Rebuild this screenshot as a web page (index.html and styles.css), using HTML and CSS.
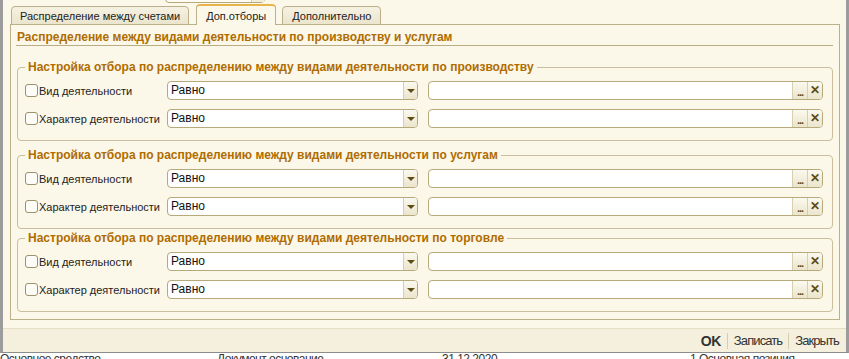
FILE: index.html
```html
<!DOCTYPE html>
<html lang="ru">
<head>
  <meta charset="UTF-8" />
  <title>Доп.отборы</title>
  <link rel="stylesheet" href="styles.css">
</head>
<body>

  <div class="window">
    <!-- cut-off field above the tabs -->
    <div class="stub"><span class="stub-box"><span class="stub-btn"></span></span></div>

    <!-- Tabs -->
    <div class="tabs">
      <div class="tab">Распределение между счетами</div>
      <div class="tab active">Доп.отборы</div>
      <div class="tab">Дополнительно</div>
    </div>

    <div class="panel">
      <div class="panel-title">Распределение между видами деятельности по производству и услугам</div>

      <fieldset class="group">
        <legend>Настройка отбора по распределению между видами деятельности по производству</legend>
        <div class="row">
          <label class="check"><span class="box"></span>Вид деятельности</label>
          <div class="select"><span class="value">Равно</span><span class="drop"></span></div>
          <div class="field"><span class="value"></span><span class="btn dots">...</span><span class="btn clear">✕</span></div>
        </div>
        <div class="row">
          <label class="check"><span class="box"></span>Характер деятельности</label>
          <div class="select"><span class="value">Равно</span><span class="drop"></span></div>
          <div class="field"><span class="value"></span><span class="btn dots">...</span><span class="btn clear">✕</span></div>
        </div>
      </fieldset>

      <fieldset class="group">
        <legend>Настройка отбора по распределению между видами деятельности по услугам</legend>
        <div class="row">
          <label class="check"><span class="box"></span>Вид деятельности</label>
          <div class="select"><span class="value">Равно</span><span class="drop"></span></div>
          <div class="field"><span class="value"></span><span class="btn dots">...</span><span class="btn clear">✕</span></div>
        </div>
        <div class="row">
          <label class="check"><span class="box"></span>Характер деятельности</label>
          <div class="select"><span class="value">Равно</span><span class="drop"></span></div>
          <div class="field"><span class="value"></span><span class="btn dots">...</span><span class="btn clear">✕</span></div>
        </div>
      </fieldset>

      <fieldset class="group">
        <legend>Настройка отбора по распределению между видами деятельности по торговле</legend>
        <div class="row">
          <label class="check"><span class="box"></span>Вид деятельности</label>
          <div class="select"><span class="value">Равно</span><span class="drop"></span></div>
          <div class="field"><span class="value"></span><span class="btn dots">...</span><span class="btn clear">✕</span></div>
        </div>
        <div class="row">
          <label class="check"><span class="box"></span>Характер деятельности</label>
          <div class="select"><span class="value">Равно</span><span class="drop"></span></div>
          <div class="field"><span class="value"></span><span class="btn dots">...</span><span class="btn clear">✕</span></div>
        </div>
      </fieldset>
    </div>

    <!-- Footer commands -->
    <div class="footer">
      <span class="cmd ok">OK</span>
      <span class="cmd">Записать</span>
      <span class="cmd">Закрыть</span>
    </div>
  </div>

  <!-- list behind the window -->
  <div class="under">
    <span class="cell c1">Основное средство</span>
    <span class="cell c2">Документ основание</span>
    <span class="cell c3">31.12.2020</span>
    <span class="cell c4">1 Основная позиция</span>
  </div>

</body>
</html>
```

FILE: styles.css
```css
* { margin: 0; padding: 0; box-sizing: border-box; }

html, body {
  width: 849px;
  height: 359px;
  overflow: hidden;
  background: #fff;
  font-family: "Liberation Sans", Arial, sans-serif;
  font-size: 11px;
  color: #222;
}

.window {
  height: 353px;
  background: #fbf8e9;
  border-left: 3px solid #9c9c9c;
  border-right: 3px solid #9c9c9c;
  border-bottom: 1px solid #8c8c8c;
  display: flex;
  flex-direction: column;
}

/* field cut off at the top edge */
.stub {
  height: 4px;
  padding-left: 162px;
}

.stub-box {
  display: block;
  width: 100px;
  height: 12px;
  margin-top: -9px;
  border: 1px solid #b6a97c;
  border-radius: 0 0 4px 4px;
  background: #fdfbf2;
  position: relative;
}

.stub-btn {
  display: block;
  position: absolute;
  right: 0;
  top: 0;
  width: 13px;
  height: 10px;
  border-left: 1px solid #d6cca8;
  background: #f3eed9;
}

/* Tabs */
.tabs {
  display: flex;
  align-items: flex-end;
  gap: 6px;
  height: 21px;
  margin: 0 0 -1px 8px;
  position: relative;
  z-index: 1;
}

.tab {
  height: 19px;
  padding: 2px 9px 0;
  border: 1px solid #bcb08a;
  border-radius: 4px 4px 0 0;
  background: linear-gradient(#f6f2e2, #ebe5cd);
  color: #222;
  line-height: 14px;
}

.tab:first-child {
  padding: 2px 8px 0;
  margin-right: 1px;
}

.tab.active {
  height: 21px;
  padding-top: 3px;
  border-top: 2px solid #e9b44c;
  border-bottom: none;
  background: #fbf8e9;
}

/* Tab page */
.panel {
  height: 296px;
  margin: 0 6px 8px 7px;
  padding-top: 5px;
  border: 1px solid #bcb08a;
}

.panel-title {
  margin: 0 6px 0 5px;
  padding-left: 1px;
  border-bottom: 1px solid #b9ad86;
  line-height: 15px;
  font-size: 12px;
  font-weight: bold;
  color: #b06c00;
}

.group {
  margin: 2px 6px 0 6px;
  padding: 7px 9px 12px 7px;
  border: 1px solid #c9bf9c;
  border-radius: 4px;
}

.group:first-of-type {
  margin-top: 14px;
  margin-bottom: 7px;
}

.group legend {
  padding: 0 3px;
  line-height: 14px;
  font-size: 12px;
  font-weight: bold;
  color: #b06c00;
}

.row {
  display: flex;
  align-items: center;
  height: 19px;
}

.row + .row {
  margin-top: 9px;
}

.check {
  width: 142px;
  display: flex;
  align-items: center;
  white-space: nowrap;
}

.box {
  width: 13px;
  height: 13px;
  margin-right: 1px;
  border: 1px solid #9b9070;
  border-radius: 3px;
  background: #fdfcf6;
}

.select,
.field {
  height: 19px;
  display: flex;
  border: 1px solid #b6a97c;
  border-radius: 4px;
  background: #fff;
  overflow: hidden;
}

.select {
  width: 251px;
}

.field {
  flex: 1;
  margin-left: 10px;
}

.value {
  flex: 1;
  padding-left: 3px;
  line-height: 17px;
  font-size: 12px;
  color: #111;
}

.drop,
.btn {
  width: 14px;
  border-left: 1px solid #d8cfac;
  background: linear-gradient(#fbf9ef, #ebe5cc);
  position: relative;
}

.drop::after {
  content: "";
  position: absolute;
  left: 3px;
  top: 7px;
  border-left: 4px solid transparent;
  border-right: 4px solid transparent;
  border-top: 4px solid #5e4c12;
}

.btn {
  width: 15px;
  text-align: center;
  color: #5e4c12;
  font-weight: bold;
}

.dots {
  line-height: 20px;
  font-size: 11px;
  letter-spacing: -1px;
}

.clear {
  line-height: 17px;
  font-size: 12px;
}

/* Footer */
.footer {
  height: 24px;
  display: flex;
  justify-content: flex-end;
  align-items: center;
  padding-right: 1px;
  border-top: 1px solid #e6dfc5;
  background: #f4f0dd;
}

.cmd {
  padding: 0 6px;
  line-height: 16px;
  font-size: 13px;
  letter-spacing: -0.9px;
  color: #333;
  border-left: 1px solid #d6cdac;
}

.cmd.ok {
  border-left: none;
  font-weight: bold;
  font-size: 14px;
  letter-spacing: -0.5px;
}

/* rows of the list behind */
.under {
  height: 6px;
  overflow: hidden;
  position: relative;
  font-size: 12px;
  letter-spacing: -0.5px;
}

.cell {
  position: absolute;
  top: -1px;
  line-height: 14px;
  color: #333;
}

.c1 { left: 0; }
.c2 { left: 217px; }
.c3 { left: 442px; }
.c4 { left: 690px; }
```
